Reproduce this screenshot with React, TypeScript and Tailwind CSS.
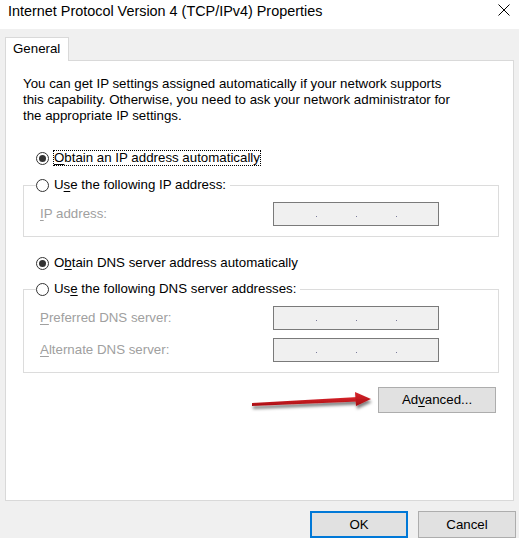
import React from "react";

const Radio = ({ checked }: { checked?: boolean }) => (
  <span className="w-[13px] h-[13px] rounded-full border border-[#333333] bg-white flex items-center justify-center shrink-0">
    {checked && <span className="w-[7px] h-[7px] rounded-full bg-[#333333]" />}
  </span>
);

const IpBox = () => (
  <div className="w-[166px] h-[24px] border border-[#7a7a7a] bg-[#f0f0f0] flex items-end pb-[8px] pl-[42px] gap-[39px]">
    <span className="w-[1px] h-[1px] bg-[#7a7a9a]" />
    <span className="w-[1px] h-[1px] bg-[#7a7a9a]" />
    <span className="w-[1px] h-[1px] bg-[#7a7a9a]" />
  </div>
);

const Key = ({ children }: { children: React.ReactNode }) => (
  <span className="underline underline-offset-[2px]">{children}</span>
);

const Field = ({ label }: { label: React.ReactNode }) => (
  <div className="flex items-center pl-[16px]">
    <span className="w-[233px] text-[#a0a0a0]">{label}</span>
    <IpBox />
  </div>
);

const Arrow = () => (
  <svg
    className="absolute left-[235px] top-[325px]"
    width="140"
    height="30"
    viewBox="0 0 140 30"
  >
    <defs>
      <filter id="sh" x="-10%" y="-50%" width="130%" height="200%">
        <feDropShadow dx="1" dy="3" stdDeviation="1.6" floodColor="#000" floodOpacity="0.5" />
      </filter>
      <linearGradient id="rg" x1="0" y1="0" x2="0" y2="1">
        <stop offset="0" stopColor="#d8262c" />
        <stop offset="1" stopColor="#a80d12" />
      </linearGradient>
    </defs>
    <g filter="url(#sh)">
      <polygon points="11,17 117,11 117,15.5 11,20" fill="url(#rg)" />
      <polygon points="114,6 130,13 115,20" fill="url(#rg)" />
    </g>
  </svg>
);

export default function App() {
  return (
    <div className="w-[519px] h-[538px] bg-[#f0f0f0] flex flex-col overflow-hidden text-[13.3px] leading-[16px] text-black font-['Liberation_Sans',Arial,sans-serif]">
      <div className="h-[29px] bg-white flex items-start justify-between pl-[8px] pr-[9px] pt-[1px]">
        <span className="text-[14.4px] leading-[20px]">Internet Protocol Version 4 (TCP/IPv4) Properties</span>
        <svg width="12" height="12" viewBox="0 0 12 12" className="mt-[3px]">
          <path d="M0.5 0.5 L11.5 11.5 M11.5 0.5 L0.5 11.5" stroke="#000" strokeWidth="1" />
        </svg>
      </div>

      <div className="px-[5px] pt-[8px] flex flex-col">
        <div className="w-[64px] h-[24px] -mb-px relative z-10 bg-white border border-b-0 border-[#d9d9d9] pl-[7px] pt-[3px]">
          General
        </div>
        <div className="relative h-[441px] bg-white border border-[#d9d9d9] pl-[17px] pr-[16px] pt-[15px] flex flex-col">
          <p>
            You can get IP settings assigned automatically if your network supports
            <br />
            this capability. Otherwise, you need to ask your network administrator for
            <br />
            the appropriate IP settings.
          </p>

          <div className="mt-[26px] h-[16px] flex items-center pl-[13px] gap-[4px]">
            <Radio checked />
            <span className="border border-dotted border-black leading-[14px]">
              <Key>O</Key>btain an IP address automatically
            </span>
          </div>

          <fieldset className="mt-[11px] w-[476px] border border-[#dcdcdc] pb-[10px]">
            <legend className="ml-[12px] pr-[4px] h-[16px] flex items-center gap-[5px]">
              <Radio />
              <span>
                U<Key>s</Key>e the following IP address:
              </span>
            </legend>
            <div className="mt-[9px]">
              <Field label={<><Key>I</Key>P address:</>} />
            </div>
          </fieldset>

          <div className="mt-[18px] h-[16px] flex items-center pl-[13px] gap-[5px]">
            <Radio checked />
            <span>
              O<Key>b</Key>tain DNS server address automatically
            </span>
          </div>

          <fieldset className="mt-[10px] w-[476px] border border-[#dcdcdc] pb-[10px]">
            <legend className="ml-[12px] pr-[4px] h-[16px] flex items-center gap-[5px]">
              <Radio />
              <span>
                Us<Key>e</Key> the following DNS server addresses:
              </span>
            </legend>
            <div className="mt-[9px] flex flex-col gap-[8px]">
              <Field label={<><Key>P</Key>referred DNS server:</>} />
              <Field label={<><Key>A</Key>lternate DNS server:</>} />
            </div>
          </fieldset>

          <button className="mt-[14px] self-end mr-[1px] w-[118px] h-[26px] bg-[#e1e1e1] border border-[#adadad]">
            Ad<Key>v</Key>anced...
          </button>

          <Arrow />
        </div>

        <div className="mt-[10px] flex justify-end gap-[10px] -mr-[2px]">
          <button className="w-[98px] h-[27px] bg-[#e1e1e1] border-2 border-[#0078d7]">OK</button>
          <button className="w-[98px] h-[27px] bg-[#e1e1e1] border border-[#adadad]">Cancel</button>
        </div>
      </div>
    </div>
  );
}
